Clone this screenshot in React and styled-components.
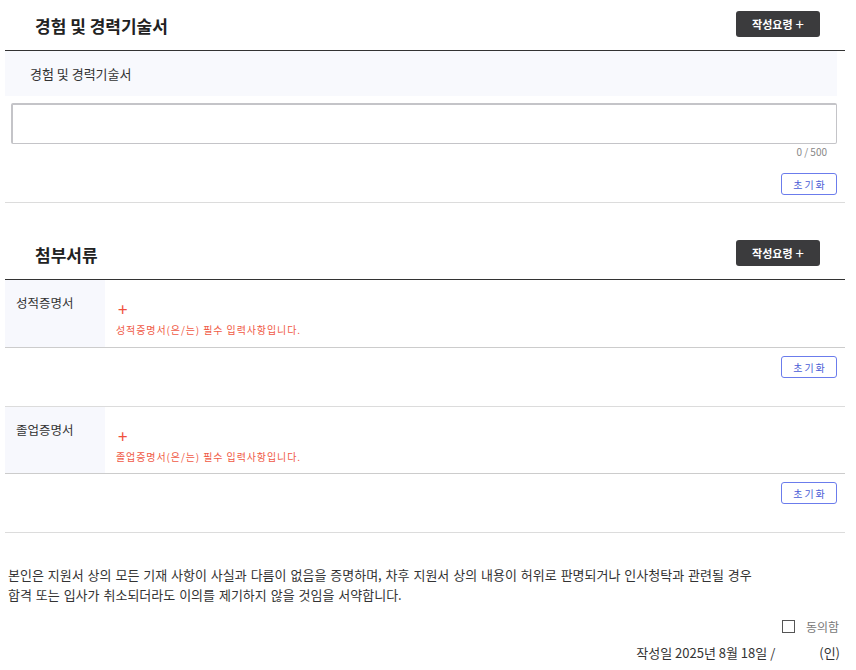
import React from "react";
import styled, { createGlobalStyle } from "styled-components";

const GlobalStyle = createGlobalStyle`
  body {
    margin: 0;
    background: #fff;
    font-family: "Noto Sans CJK KR", "Noto Sans", sans-serif;
    color: #333;
  }
`;

const Page = styled.div`
  width: 840px;
  margin: 0 11px 0 5px;
`;

const Section = styled.section`
  margin-top: ${props => props.$gap || 0}px;
`;

const SectionHeader = styled.div`
  display: flex;
  justify-content: space-between;
  align-items: center;
  height: 51px;
  padding: 0 25px 0 30px;
  border-bottom: 1px solid #333;
  box-sizing: border-box;
`;

const Title = styled.h2`
  margin: 0;
  font-size: 17px;
  font-weight: 700;
  color: #222;
`;

const GuideBtn = styled.button`
  display: flex;
  align-items: center;
  justify-content: center;
  gap: 3px;
  width: 84px;
  height: 26px;
  margin-bottom: 3px;
  border: none;
  border-radius: 3px;
  background: #3b3b3d;
  color: #fff;
  font-family: inherit;
  font-size: 11px;
  font-weight: 700;
  & span {
    font-size: 15px;
    font-weight: 400;
    line-height: 1;
  }
`;

const FieldHead = styled.div`
  height: 45px;
  display: flex;
  align-items: center;
  padding-left: 25px;
  margin-right: 8px;
  background: #f8f9fd;
  font-size: 13px;
  color: #333;
`;

const TextArea = styled.textarea`
  display: block;
  box-sizing: border-box;
  width: 826px;
  height: 41px;
  margin: 7px 0 0 6px;
  border: 1px solid #c4c4c8;
  border-top-width: 2px;
  border-left-width: 2px;
  border-radius: 2px;
  resize: none;
  font-family: inherit;
`;

const Counter = styled.div`
  text-align: right;
  padding-right: 18px;
  margin-top: 1px;
  font-size: 10px;
  color: #888;
  line-height: 14px;
`;

const ResetRow = styled.div`
  display: flex;
  justify-content: flex-end;
  padding-right: 8px;
  margin-top: ${props => props.$top}px;
  padding-bottom: ${props => props.$bottom}px;
  border-bottom: 1px solid #dcdcdc;
`;

const ResetBtn = styled.button`
  width: 56px;
  height: 22px;
  border: 1px solid #6b7cec;
  border-radius: 3px;
  background: #fff;
  color: #4a5cd6;
  font-family: inherit;
  font-size: 10px;
  letter-spacing: 2px;
  padding: 0 0 0 2px;
`;

const FileRow = styled.div`
  display: flex;
  height: ${props => props.$h}px;
  border-bottom: 1px solid #ccc;
  box-sizing: border-box;
`;

const FileLabel = styled.div`
  width: 100px;
  padding: 13px 0 0 11px;
  box-sizing: border-box;
  background: #f7f8fd;
  font-size: 12.5px;
  color: #333;
`;

const FileBody = styled.div`
  display: flex;
  flex-direction: column;
  padding: 20px 0 0 11px;
`;

const AddMark = styled.span`
  color: #f0503c;
  font-size: 17px;
  line-height: 17px;
  padding-left: 2px;
`;

const ErrorText = styled.div`
  margin-top: 5px;
  color: #f05a46;
  font-size: 10px;
  letter-spacing: 0.9px;
`;

const Pledge = styled.p`
  margin: 32px 0 0 3px;
  font-size: 13px;
  line-height: 20px;
  color: #333;
  word-spacing: 1px;
`;

const AgreeRow = styled.label`
  display: flex;
  justify-content: flex-end;
  align-items: center;
  gap: 11px;
  margin-top: 13px;
  padding-right: 6px;
  font-size: 12px;
  color: #777;
`;

const Box = styled.span`
  width: 11px;
  height: 11px;
  border: 1px solid #555;
`;

const DateRow = styled.div`
  display: flex;
  justify-content: flex-end;
  gap: 44px;
  margin-top: 8px;
  padding-right: 5px;
  font-size: 13px;
  color: #333;
`;

const files = [
  { name: "성적증명서", h: 68 },
  { name: "졸업증명서", h: 67 },
];

export default function App() {
  return (
    <Page>
      <GlobalStyle />
      <Section>
        <SectionHeader>
          <Title>경험 및 경력기술서</Title>
          <GuideBtn>작성요령<span>+</span></GuideBtn>
        </SectionHeader>
        <FieldHead>경험 및 경력기술서</FieldHead>
        <TextArea />
        <Counter>0 / 500</Counter>
        <ResetRow $top={14} $bottom={7}>
          <ResetBtn>초기화</ResetBtn>
        </ResetRow>
      </Section>

      <Section $gap={26}>
        <SectionHeader>
          <Title>첨부서류</Title>
          <GuideBtn>작성요령<span>+</span></GuideBtn>
        </SectionHeader>
        {files.map(f => (
          <div key={f.name}>
            <FileRow $h={f.h}>
              <FileLabel>{f.name}</FileLabel>
              <FileBody>
                <AddMark>+</AddMark>
                <ErrorText>{f.name}(은/는) 필수 입력사항입니다.</ErrorText>
              </FileBody>
            </FileRow>
            <ResetRow $top={8} $bottom={28}>
              <ResetBtn>초기화</ResetBtn>
            </ResetRow>
          </div>
        ))}
      </Section>

      <Pledge>
        본인은 지원서 상의 모든 기재 사항이 사실과 다름이 없음을 증명하며, 차후 지원서 상의 내용이 허위로 판명되거나 인사청탁과 관련될 경우
        <br />
        합격 또는 입사가 취소되더라도 이의를 제기하지 않을 것임을 서약합니다.
      </Pledge>
      <AgreeRow>
        <Box />
        동의함
      </AgreeRow>
      <DateRow>
        <span>작성일 2025년 8월 18일 /</span>
        <span>(인)</span>
      </DateRow>
    </Page>
  );
}
